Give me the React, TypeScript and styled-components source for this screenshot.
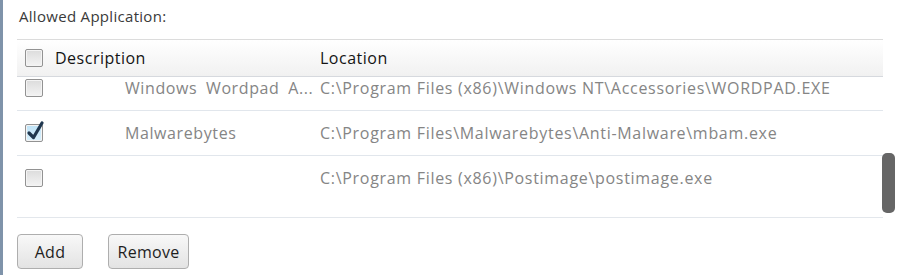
import styled, { createGlobalStyle } from 'styled-components';

interface AppRow {
  checked: boolean;
  description: string;
  location: string;
}

const rows: AppRow[] = [
  {
    checked: false,
    description: 'Windows Wordpad A...',
    location: 'C:\\Program Files (x86)\\Windows NT\\Accessories\\WORDPAD.EXE',
  },
  {
    checked: true,
    description: 'Malwarebytes',
    location: 'C:\\Program Files\\Malwarebytes\\Anti-Malware\\mbam.exe',
  },
  {
    checked: false,
    description: '',
    location: 'C:\\Program Files (x86)\\Postimage\\postimage.exe',
  },
];

const GlobalStyle = createGlobalStyle`
  html, body {
    margin: 0;
    padding: 0;
    background: #ffffff;
  }
  body {
    font-family: "Open Sans", "Noto Sans", sans-serif;
    overflow: hidden;
  }
`;

const Window = styled.div`
  width: 902px;
  height: 275px;
  box-sizing: border-box;
  border-left: 3px solid #7f93aa;
  padding: 6px 0 0 14px;
  background: #ffffff;
`;

const Title = styled.div`
  font-size: 15px;
  letter-spacing: 0.3px;
  color: #3a3a3a;
  height: 33px;
  padding-left: 2px;
  line-height: 20px;
`;

const Grid = styled.div`
  position: relative;
  width: 866px;
`;

const Header = styled.div`
  display: flex;
  align-items: center;
  height: 36px;
  border-top: 1px solid #dcdcdc;
  border-bottom: 1px solid #d6d9de;
  background: linear-gradient(#ffffff, #f1f1f1);
`;

const HeaderCell = styled.div<{ $width: number }>`
  width: ${(p) => p.$width}px;
  font-size: 16px;
  letter-spacing: 0.5px;
  color: #141414;
  flex-shrink: 0;
`;

const CheckCell = styled.div`
  width: 30px;
  padding-left: 8px;
  display: flex;
  align-items: center;
  flex-shrink: 0;
`;

const Viewport = styled.div`
  height: 140px;
  overflow: hidden;
  border-bottom: 1px solid #e3e7ec;
`;

const RowList = styled.div`
  margin-top: -12px;
`;

const Row = styled.div`
  display: flex;
  align-items: center;
  height: 44px;
  border-top: 1px solid #e1e6ec;
`;

const DescCell = styled.div`
  width: 265px;
  padding-left: 70px;
  box-sizing: border-box;
  font-size: 16px;
  letter-spacing: 0.6px;
  color: #858585;
  white-space: nowrap;
  word-spacing: 4px;
  flex-shrink: 0;
`;

const LocCell = styled.div`
  font-size: 16px;
  letter-spacing: 0.7px;
  color: #858585;
  white-space: nowrap;
`;

const Box = styled.div<{ $checked?: boolean }>`
  position: relative;
  width: 16px;
  height: 16px;
  border: 1px solid #929292;
  border-radius: 2px;
  background: ${(p) =>
    p.$checked
      ? 'linear-gradient(#bfe3f7, #d9f0fc)'
      : 'linear-gradient(#dcdcdc, #f3f3f3)'};
  box-shadow: inset 0 0 0 1px #f4f4f4;
`;

const Tick = styled.svg`
  position: absolute;
  left: 0px;
  top: -5px;
`;

const Thumb = styled.div`
  position: absolute;
  left: 865px;
  top: 114px;
  width: 13px;
  height: 60px;
  border-radius: 5px;
  background: #666666;
`;

const Buttons = styled.div`
  display: flex;
  gap: 25px;
  margin-top: 16px;
`;

const Button = styled.button<{ $width: number }>`
  width: ${(p) => p.$width}px;
  height: 35px;
  border: 1px solid #aeaeae;
  border-radius: 4px;
  background: linear-gradient(#f8f8f8, #e3e3e3);
  font-family: "Open Sans", "Noto Sans", sans-serif;
  font-size: 16px;
  letter-spacing: 0.3px;
  color: #1e1e1e;
  padding: 0;
  cursor: pointer;
`;

const CheckBox = ({ checked }: { checked?: boolean }) => (
  <Box $checked={checked}>
    {checked && (
      <Tick width="19" height="21" viewBox="0 0 19 21">
        <path
          d="M3 13 L7.5 17.5 L16 3"
          fill="none"
          stroke="#20374f"
          strokeWidth="3.2"
          strokeLinecap="round"
          strokeLinejoin="round"
        />
      </Tick>
    )}
  </Box>
);

const App = () => {
  return (
    <>
      <GlobalStyle />
      <Window>
        <Title>Allowed Application:</Title>
        <Grid>
          <Header>
            <CheckCell>
              <CheckBox />
            </CheckCell>
            <HeaderCell $width={265}>Description</HeaderCell>
            <HeaderCell $width={400}>Location</HeaderCell>
          </Header>
          <Viewport>
            <RowList>
              {rows.map((row, i) => (
                <Row key={i}>
                  <CheckCell>
                    <CheckBox checked={row.checked} />
                  </CheckCell>
                  <DescCell>{row.description}</DescCell>
                  <LocCell>{row.location}</LocCell>
                </Row>
              ))}
            </RowList>
          </Viewport>
          <Thumb />
        </Grid>
        <Buttons>
          <Button $width={66}>Add</Button>
          <Button $width={81}>Remove</Button>
        </Buttons>
      </Window>
    </>
  );
};

export default App;
